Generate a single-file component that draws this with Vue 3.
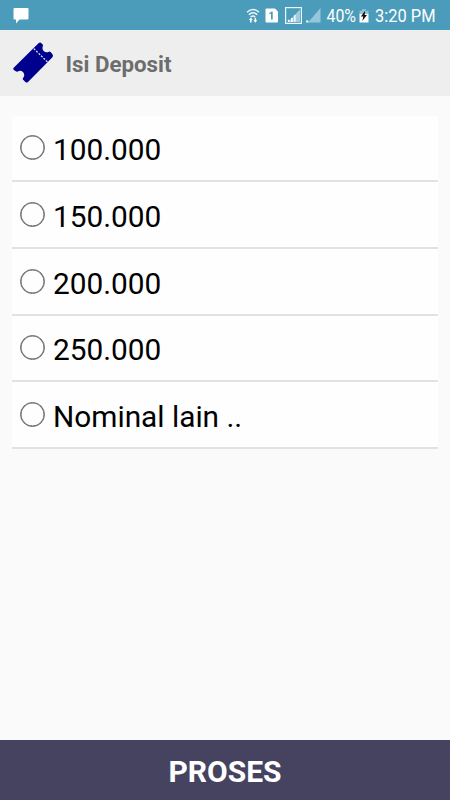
<template>
  <div class="pantalla">
    <header class="barra-estado">
      <svg class="icono-mensaje" width="16" height="16" viewBox="0 0 16 16">
        <path d="M1.500 0h13q1 0 1 1v9.500q0 1-1 1H6.500L3 15.500v-4H1.500q-1 0-1-1V1q0-1 1-1z" fill="#fff" />
      </svg>
      <svg class="iconos-estado" width="202" height="30" viewBox="0 0 202 30">
        <!-- wifi -->
        <g fill="none" stroke="#eef8fb" stroke-width="1.500">
          <path d="M1 12.200q6-5.400 12 0" />
          <path d="M2.800 14.700q4.200-3.800 8.400 0" />
          <path d="M4.700 17q2.300-2 4.600 0" />
        </g>
        <path d="M2.800 20l2-2.400 2 2.400h-1.200v2.600H4V20zM7.400 20.200h1.200v-2.400h1.500v2.400h1.200l-2 2.500z" fill="#fff" />
        <!-- sim -->
        <path d="M20.500 8.500h8.500l3 3v10q0 1-1 1H20.500q-1 0-1-1v-12q0-1 1-1z" fill="#fff" />
        <path d="M23.400 13l2.300-1.600h1v8H25v-5.900l-1.600 1z" fill="#4a9cba" />
        <!-- señal -->
        <rect x="39.600" y="7.600" width="15.800" height="15.800" fill="none" stroke="#eef8fb" stroke-width="1.200" />
        <path d="M42 22L54 9.500V22z" fill="#9fcde0" />
        <path d="M41.800 19.800h1.800v2.200h-1.800zM45 18h1.800v4H45zM48.200 15h1.300v7h-1.300z" fill="#fff" />
        <path d="M62 22.500L74.500 8v14.500z" fill="#94c7dc" />
        <path d="M60 20.400h2.400v2.100H60z" fill="#e4f3f9" />
        <text x="80.500" y="22.400" textLength="29.500" lengthAdjust="spacingAndGlyphs">40%</text>
        <!-- batería -->
        <path d="M116 9.200h4v1.500h2.500v4h-9v-4h2.500z" fill="#8fc4d9" />
        <path d="M113.500 14h9v8.500h-9z" fill="#fff" />
        <path d="M119.300 10.500l-4.400 6h2.400l-1 4.500 4.700-6h-2.400z" fill="#111" />
        <text x="129" y="22.400" textLength="60.500" lengthAdjust="spacingAndGlyphs">3:20 PM</text>
      </svg>
    </header>

    <nav class="encabezado">
      <svg class="logo" width="42" height="42" viewBox="0 0 42 42">
        <path
          d="M26.500 1.300q1.600-1.300 2.900-.1l1.300 1.400q.7 1-.1 2.200-.7 2.500 1 4.200 2.200 1.800 4.800.9 1.200-.7 2.200.2l1.900 2.200q1.200 1.700-.3 3.300L16 39.900q-1.300 1.200-2.600 0l-2.500-2.500q-.5-.9.400-1.700 2-2.800-.2-5.500-2.300-2.300-5.300-.8-1 .6-2-.2l-1.900-1.100q-1.400-1-.2-2.300z"
          fill="#00008f"
        />
        <path d="M21.800 6.600l13.700 13.400" stroke="#e6e6f4" stroke-width="1.300" stroke-dasharray="2 1.400" />
      </svg>
      <h1>Isi Deposit</h1>
    </nav>

    <main>
      <label v-for="(opcion, i) in opciones" :key="i" class="opcion">
        <input v-model="seleccion" type="radio" name="deposito" :value="opcion" />
        <span>{{ opcion }}</span>
      </label>
    </main>

    <button class="boton-proses" type="button">PROSES</button>
  </div>
</template>

<script setup>
import { ref } from 'vue'

const opciones = ['100.000', '150.000', '200.000', '250.000', 'Nominal lain ..']
const seleccion = ref(null)
</script>

<style>
body {
  margin: 0;
}
</style>

<style scoped>
.pantalla {
  display: flex;
  flex-direction: column;
  height: 100vh;
  background: #fafafa;
  font-family: Roboto, 'Liberation Sans', sans-serif;
}
.barra-estado {
  display: flex;
  justify-content: space-between;
  height: 30px;
  background: #4a9cba;
}
.icono-mensaje {
  margin: 8px 0 0 12.5px;
}
.iconos-estado {
  margin-right: 2px;
}
.iconos-estado text {
  font-size: 19px;
  fill: #fff;
}
.encabezado {
  display: flex;
  align-items: center;
  height: 66px;
  background: #eee;
}
.logo {
  margin: 0 12px 0 11.5px;
}
h1 {
  margin: 2px 0 0;
  font-size: 22.3px;
  font-weight: 700;
  line-height: 26px;
  color: #6d6d6d;
}
main {
  flex: 1;
  padding: 19.5px 12px 0;
}
.opcion {
  display: flex;
  align-items: center;
  box-sizing: border-box;
  height: 66.7px;
  padding-left: 8px;
  border-bottom: 2px solid #e2e2e2;
  background: #fefefe;
  font-size: 29.8px;
  color: #000;
}
.opcion input {
  appearance: none;
  box-sizing: border-box;
  width: 25px;
  height: 25px;
  margin: 0 8px 0 0;
  border: 1px solid #666;
  border-radius: 50%;
  box-shadow: inset 0 0 0 0.6px #666;
}
.opcion input:checked {
  background: radial-gradient(#45435f 45%, transparent 50%);
}
.opcion span {
  margin-top: 4px;
}
.boton-proses {
  height: 60px;
  padding: 2px 0 0;
  border: 0;
  background: #45435f;
  color: #fff;
  font-family: inherit;
  font-size: 30px;
  font-weight: 700;
}
</style>
